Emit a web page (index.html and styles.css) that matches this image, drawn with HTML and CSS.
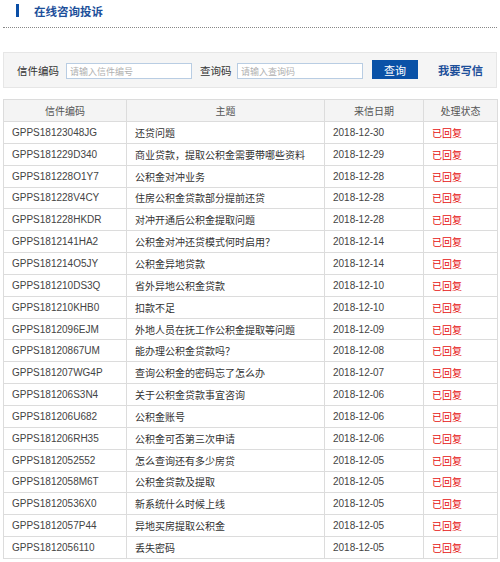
FILE: index.html
```html
<!DOCTYPE html>
<html lang="zh">
<head>
<meta charset="utf-8">
<link rel="stylesheet" href="styles.css">
</head>
<body>
<div class="page">
  <div class="title-bar">
    <span class="title-mark"></span>
    <span class="title-text">在线咨询投诉</span>
  </div>
  <div class="search">
    <label class="lbl">信件编码</label>
    <input class="inp inp1" type="text" placeholder="请输入信件编号">
    <label class="lbl lbl2">查询码</label>
    <input class="inp inp2" type="text" placeholder="请输入查询码">
    <button class="btn">查询</button>
    <a class="write">我要写信</a>
  </div>
  <table class="list">
    <colgroup><col class="c1"><col class="c2"><col class="c3"><col class="c4"></colgroup>
    <thead>
      <tr><th>信件编码</th><th>主题</th><th>来信日期</th><th>处理状态</th></tr>
    </thead>
    <tbody>
      <tr><td class="num">GPPS18123048JG</td><td>还贷问题</td><td class="num">2018-12-30</td><td class="st">已回复</td></tr>
      <tr><td class="num">GPPS181229D340</td><td>商业贷款，提取公积金需要带哪些资料</td><td class="num">2018-12-29</td><td class="st">已回复</td></tr>
      <tr><td class="num">GPPS181228O1Y7</td><td>公积金对冲业务</td><td class="num">2018-12-28</td><td class="st">已回复</td></tr>
      <tr><td class="num">GPPS181228V4CY</td><td>住房公积金贷款部分提前还贷</td><td class="num">2018-12-28</td><td class="st">已回复</td></tr>
      <tr><td class="num">GPPS181228HKDR</td><td>对冲开通后公积金提取问题</td><td class="num">2018-12-28</td><td class="st">已回复</td></tr>
      <tr><td class="num">GPPS1812141HA2</td><td>公积金对冲还贷模式何时启用？</td><td class="num">2018-12-14</td><td class="st">已回复</td></tr>
      <tr><td class="num">GPPS181214O5JY</td><td>公积金异地贷款</td><td class="num">2018-12-14</td><td class="st">已回复</td></tr>
      <tr><td class="num">GPPS181210DS3Q</td><td>省外异地公积金贷款</td><td class="num">2018-12-10</td><td class="st">已回复</td></tr>
      <tr><td class="num">GPPS181210KHB0</td><td>扣款不足</td><td class="num">2018-12-10</td><td class="st">已回复</td></tr>
      <tr><td class="num">GPPS1812096EJM</td><td>外地人员在抚工作公积金提取等问题</td><td class="num">2018-12-09</td><td class="st">已回复</td></tr>
      <tr><td class="num">GPPS18120867UM</td><td>能办理公积金贷款吗？</td><td class="num">2018-12-08</td><td class="st">已回复</td></tr>
      <tr><td class="num">GPPS181207WG4P</td><td>查询公积金的密码忘了怎么办</td><td class="num">2018-12-07</td><td class="st">已回复</td></tr>
      <tr><td class="num">GPPS181206S3N4</td><td>关于公积金贷款事宜咨询</td><td class="num">2018-12-06</td><td class="st">已回复</td></tr>
      <tr><td class="num">GPPS181206U682</td><td>公积金账号</td><td class="num">2018-12-06</td><td class="st">已回复</td></tr>
      <tr><td class="num">GPPS181206RH35</td><td>公积金可否第三次申请</td><td class="num">2018-12-06</td><td class="st">已回复</td></tr>
      <tr><td class="num">GPPS1812052552</td><td>怎么查询还有多少房贷</td><td class="num">2018-12-05</td><td class="st">已回复</td></tr>
      <tr><td class="num">GPPS1812058M6T</td><td>公积金贷款及提取</td><td class="num">2018-12-05</td><td class="st">已回复</td></tr>
      <tr><td class="num">GPPS18120536X0</td><td>新系统什么时候上线</td><td class="num">2018-12-05</td><td class="st">已回复</td></tr>
      <tr><td class="num">GPPS1812057P44</td><td>异地买房提取公积金</td><td class="num">2018-12-05</td><td class="st">已回复</td></tr>
      <tr><td class="num">GPPS1812056110</td><td>丢失密码</td><td class="num">2018-12-05</td><td class="st">已回复</td></tr>
    </tbody>
  </table>
</div>
</body>
</html>
```
FILE: styles.css
```css
* { box-sizing: border-box; }
html, body {
  margin: 0;
  padding: 0;
  background: #fff;
}
body {
  font-family: "Liberation Sans", "Noto Sans CJK SC", sans-serif;
  font-size: 10px;
  color: #333;
}
.page {
  padding: 0 3px;
}
.title-bar {
  height: 28px;
  border-bottom: 1px dotted #888;
  display: flex;
  align-items: flex-start;
  padding-top: 4px;
  padding-left: 13px;
}
.title-mark {
  width: 3px;
  height: 13px;
  background: #0a4ea6;
}
.title-text {
  margin-left: 15px;
  margin-top: 1px;
  font-family: "Noto Sans CJK SC", sans-serif;
  font-weight: bold;
  font-size: 11.5px;
  line-height: 12px;
  color: #1d4f9a;
}
.search {
  margin-top: 24px;
  height: 36px;
  background: #f5f5f5;
  border: 1px solid #e6e6e6;
  display: flex;
  align-items: center;
  padding-left: 13px;
}
.lbl {
  font-family: "Noto Sans CJK SC", sans-serif;
  font-size: 10.5px;
  color: #333;
  width: 42px;
  margin-right: 7px;
  margin-top: 1px;
  white-space: nowrap;
}
.lbl2 { margin-left: 8px; width: 31.5px; margin-right: 5.5px; }
.inp {
  height: 16px;
  width: 126px;
  border: 1px solid #b9cde3;
  background: #fff;
  padding: 0 3px;
  font-family: "Noto Sans CJK SC", sans-serif;
  font-size: 9px;
  margin-top: 2px;
  outline: none;
}
.inp::placeholder { color: #b0b0b0; }
.btn {
  margin-left: 9px;
  width: 46px;
  height: 19px;
  background: #0a52a7;
  color: #fff;
  border: none;
  font-family: "Noto Sans CJK SC", sans-serif;
  font-size: 11px;
  padding: 0;
  margin-bottom: 1px;
}
.write {
  margin-left: 20px;
  font-family: "Noto Sans CJK SC", sans-serif;
  font-weight: bold;
  font-size: 11.25px;
  color: #1d4f9a;
  margin-bottom: 1px;
}
.list {
  margin-top: 11px;
  width: 494px;
  border-collapse: collapse;
  table-layout: fixed;
}
.c1 { width: 123px; }
.c2 { width: 198px; }
.c3 { width: 99px; }
.c4 { width: 74px; }
.list th, .list td {
  border: 1px solid #dcdcdc;
  height: 21.85px;
  padding: 0 8px;
  white-space: nowrap;
  overflow: hidden;
  font-weight: normal;
}
.list th {
  background: #f4f4f4;
  color: #555;
  text-align: center;
  height: 22px;
  font-family: "Noto Sans CJK SC", sans-serif;
  font-size: 10px;
}
.list td {
  text-align: left;
  font-family: "Noto Sans CJK SC", sans-serif;
  font-size: 10px;
  color: #333;
}
.list td.num {
  font-family: "Liberation Sans", sans-serif;
  font-size: 10px;
  color: #444;
}
.list td.st {
  color: #e50f0f;
}
```
